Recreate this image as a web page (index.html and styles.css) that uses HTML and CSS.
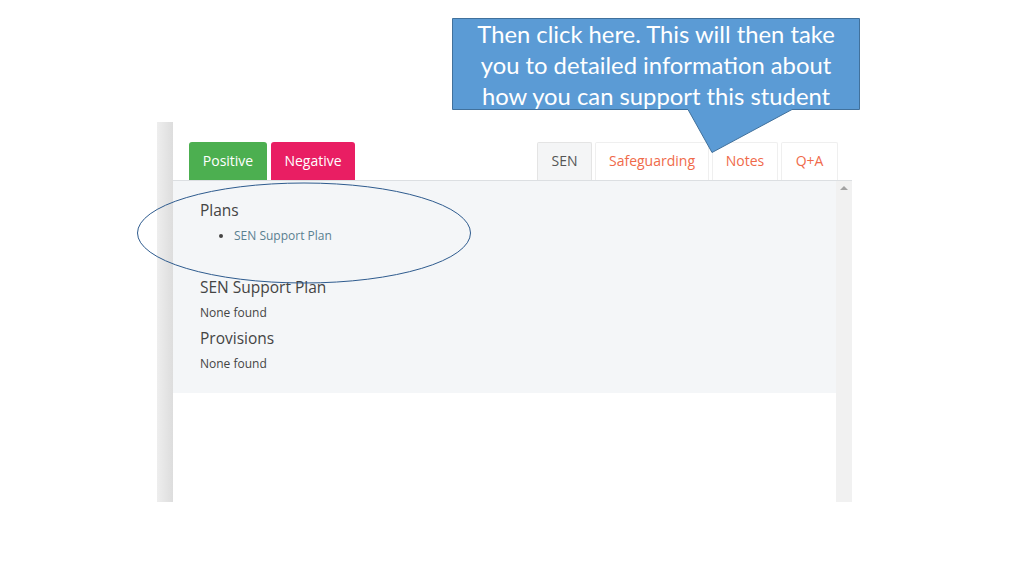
FILE: index.html
```html
<!DOCTYPE html>
<html>
<head>
<meta charset="utf-8">
<link rel="stylesheet" href="styles.css">
</head>
<body>
<div class="stage">
  <div class="frame">
    <div class="sidebar"></div>
    <div class="main">
      <div class="tabbar">
        <div class="actions">
          <span class="btn btn-pos">Positive</span>
          <span class="btn btn-neg">Negative</span>
        </div>
        <div class="tabs">
          <span class="tab active">SEN</span>
          <span class="tab">Safeguarding</span>
          <span class="tab">Notes</span>
          <span class="tab">Q+A</span>
        </div>
      </div>
      <div class="body">
        <div class="panel-wrap">
          <div class="panel">
            <h3 class="h">Plans</h3>
            <ul class="list"><li><a class="link">SEN Support Plan</a></li></ul>
            <h3 class="h h2">SEN Support Plan</h3>
            <p class="none">None found</p>
            <h3 class="h h3">Provisions</h3>
            <p class="none">None found</p>
          </div>
        </div>
        <div class="scrollbar"><span class="arrow"></span></div>
      </div>
    </div>
  </div>

  <svg class="ellipse" width="340" height="110" viewBox="0 0 340 110">
    <ellipse cx="167" cy="51" rx="166.5" ry="50" fill="none" stroke="#2e5b8e" stroke-width="1"/>
  </svg>

  <div class="callout">
    <svg class="callout-shape" width="410" height="138" viewBox="0 0 410 138">
      <path d="M0.5 0.5 H407.5 V91.5 H340 L260 134.5 L236 91.5 H0.5 Z" fill="#5b9bd5" stroke="#41719c" stroke-width="1"/>
    </svg>
    <div class="callout-text">Then click here. This will then take you to detailed information about how you can support this student</div>
  </div>
</div>
</body>
</html>
```
FILE: styles.css
```css
* { box-sizing: border-box; }
html, body { margin: 0; padding: 0; background: #fff; }
body { width: 1024px; height: 576px; overflow: hidden; font-family: "Open Sans", "Noto Sans", sans-serif; color: #444; }
.stage { position: relative; width: 1024px; height: 576px; padding: 122px 0 0 157px; }
.frame { display: flex; width: 695px; height: 380px; }
.sidebar { width: 16px; background: linear-gradient(to right, #eeeeee, #dddddd); }
.main { flex: 1; display: flex; flex-direction: column; }
.tabbar { height: 59px; display: flex; justify-content: space-between; align-items: flex-end; padding: 0 14px 0 16px; border-bottom: 1px solid #dcdfe2; }
.actions { display: flex; gap: 4px; }
.btn { display: flex; align-items: center; justify-content: center; height: 38px; padding-bottom: 2px; border-radius: 3px 3px 0 0; color: #fff; font-size: 14px; }
.btn-pos { width: 78px; background: #4caf50; }
.btn-neg { width: 84px; background: #e91e63; }
.tabs { display: flex; gap: 3px; }
.tab { display: flex; align-items: center; justify-content: center; height: 38px; padding-bottom: 2px; border: 1px solid #efefef; border-bottom: none; background: #fff; color: #f06a4a; font-size: 14px; border-radius: 2px 2px 0 0; }
.tab:nth-child(1) { width: 55px; }
.tab:nth-child(2) { width: 114px; }
.tab:nth-child(3) { width: 66px; }
.tab:nth-child(4) { width: 57px; }
.tab.active { background: #f4f5f6; color: #555; border-color: #e4e4e4; }
.body { flex: 1; display: flex; }
.panel-wrap { flex: 1; }
.panel { background: #f4f6f8; height: 212px; padding: 19px 27px 0; }
.h { margin: 0; font-weight: 400; font-size: 15.5px; line-height: 20px; color: #444; }
.list { margin: 7px 0 0; padding-left: 34px; font-size: 12px; line-height: 17px; }
.list li { color: #444; }
.link { color: #5a8090; }
.h2 { margin-top: 33px; }
.h3 { margin-top: 7px; }
.none { margin: 8px 0 0; font-size: 12px; line-height: 16px; color: #444; }
.scrollbar { width: 16px; background: #f1f1f1; position: relative; }
.arrow { position: absolute; top: 5px; left: 4px; width: 0; height: 0; border-left: 4px solid transparent; border-right: 4px solid transparent; border-bottom: 4px solid #a3a3a3; }
.ellipse { position: absolute; left: 137px; top: 182px; }
.callout { position: absolute; left: 452px; top: 18px; width: 410px; height: 138px; }
.callout-shape { position: absolute; left: 0; top: 0; }
.callout-text { position: relative; width: 408px; padding: 1px 6px 0; text-align: center; color: #fff; font-family: Lato, "Open Sans", sans-serif; font-size: 23.8px; line-height: 31px; }
```
